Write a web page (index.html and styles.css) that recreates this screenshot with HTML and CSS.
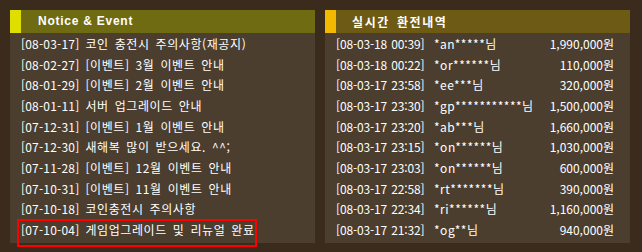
FILE: index.html
```html
<!DOCTYPE html>
<html lang="ko">
<head>
<meta charset="utf-8">
<link rel="stylesheet" href="styles.css">
</head>
<body>
<div class="wrap">
  <section class="panel notice">
    <div class="head"><span class="mark"></span><span class="title en">Notice &amp; Event</span></div>
    <ul class="list">
      <li><span class="d">[08-03-17]</span> 코인 충전시 주의사항(재공지)</li>
      <li><span class="d">[08-02-27]</span> [이벤트] 3월 이벤트 안내</li>
      <li><span class="d">[08-01-29]</span> [이벤트] 2월 이벤트 안내</li>
      <li><span class="d">[08-01-11]</span> 서버 업그레이드 안내</li>
      <li><span class="d">[07-12-31]</span> [이벤트] 1월 이벤트 안내</li>
      <li><span class="d">[07-12-30]</span> 새해복 많이 받으세요. ^^;</li>
      <li><span class="d">[07-11-28]</span> [이벤트] 12월 이벤트 안내</li>
      <li><span class="d">[07-10-31]</span> [이벤트] 11월 이벤트 안내</li>
      <li><span class="d">[07-10-18]</span> 코인충전시 주의사항</li>
      <li class="sel"><span class="d">[07-10-04]</span> 게임업그레이드 및 리뉴얼 완료</li>
    </ul>
  </section>
  <section class="panel exchange">
    <div class="head"><span class="mark"></span><span class="title">실시간 환전내역</span></div>
    <ul class="list">
      <li><span class="t">[08-03-18 00:39]</span><span class="n">*an*****님</span><span class="a">1,990,000원</span></li>
      <li><span class="t">[08-03-18 00:22]</span><span class="n">*or******님</span><span class="a">110,000원</span></li>
      <li><span class="t">[08-03-17 23:58]</span><span class="n">*ee***님</span><span class="a">320,000원</span></li>
      <li><span class="t">[08-03-17 23:30]</span><span class="n">*gp***********님</span><span class="a">1,500,000원</span></li>
      <li><span class="t">[08-03-17 23:20]</span><span class="n">*ab***님</span><span class="a">1,660,000원</span></li>
      <li><span class="t">[08-03-17 23:15]</span><span class="n">*on******님</span><span class="a">1,030,000원</span></li>
      <li><span class="t">[08-03-17 23:03]</span><span class="n">*on******님</span><span class="a">600,000원</span></li>
      <li><span class="t">[08-03-17 22:58]</span><span class="n">*rt*******님</span><span class="a">390,000원</span></li>
      <li><span class="t">[08-03-17 22:34]</span><span class="n">*ri******님</span><span class="a">1,160,000원</span></li>
      <li><span class="t">[08-03-17 21:32]</span><span class="n">*og**님</span><span class="a">940,000원</span></li>
    </ul>
  </section>
</div>
</body>
</html>
```

FILE: styles.css
```css
html, body {
  margin: 0;
  padding: 0;
  background: #3b2b1c;
}
body {
  width: 642px;
  height: 252px;
  overflow: hidden;
  font-family: "Noto Sans CJK KR", "Noto Sans", sans-serif;
  font-size: 12px;
  color: #ffffff;
}
.wrap {
  display: flex;
  gap: 10px;
  padding: 10px 12px 0 10px;
}
.panel {
  width: 305px;
  height: 233px;
  background: #4b3e2f;
}
.head {
  height: 23px;
  display: flex;
  align-items: center;
}
.notice .head { background: #6e6b13; }
.exchange .head { background: #6d5a14; }
.mark {
  width: 11px;
  height: 23px;
}
.notice .mark { background: #dede00; }
.exchange .mark { background: #f2b900; }
.title {
  font-weight: bold;
  font-size: 12px;
  line-height: 23px;
  margin-left: 16px;
  letter-spacing: 1.6px;
  word-spacing: 2px;
}
.title.en {
  font-family: "Liberation Sans", Arial, sans-serif;
  margin-left: 17px;
  letter-spacing: 0.75px;
  word-spacing: 0;
}
.list {
  list-style: none;
  margin: 0;
  padding: 1px 0 0 11px;
}
.list li {
  height: 20.67px;
  line-height: 20.67px;
  white-space: nowrap;
  letter-spacing: 0.6px;
  word-spacing: 2px;
}
.d {
  letter-spacing: 0.2px;
}
.exchange .list li {
  display: flex;
  word-spacing: 0;
}
.exchange .t {
  flex: 0 0 98px;
  letter-spacing: -0.15px;
  word-spacing: 1px;
}
.exchange .n {
  flex: 1;
  letter-spacing: 0.5px;
}
.exchange .a {
  margin-right: 16px;
  text-align: right;
  letter-spacing: 0;
}
.sel {
  position: relative;
}
.sel::after {
  content: "";
  position: absolute;
  left: -4px;
  top: -1px;
  width: 236px;
  height: 24px;
  border: 2px solid #ff0000;
}
```
